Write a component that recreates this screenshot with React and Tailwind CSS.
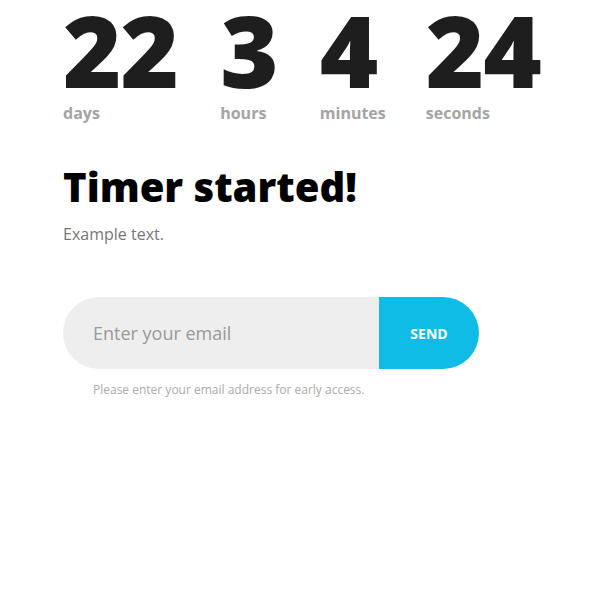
export default function App() {
  const items = [
    ["22", "days", "mr-[42px]"],
    ["3", "hours", "mr-[42px]"],
    ["4", "minutes", "mr-[40px]"],
    ["24", "seconds", ""],
  ];
  return (
    <div className="min-h-[600px] bg-white pl-[63px]">
      <div className="font-['Open_Sans',sans-serif]">
        <div className="flex">
          {items.map(([n, l, m]) => (
            <div key={l} className={`${m} flex flex-col`}>
              <div className="text-[100px] font-extrabold leading-[98px] tracking-[-1px] text-[#1e1e1e]">{n}</div>
              <div className="mt-[3px] text-[16px] font-bold leading-[24px] text-[#a4a4a4]">{l}</div>
            </div>
          ))}
        </div>
        <h1 className="mt-[37px] text-[40px] font-extrabold leading-[50px] text-black">Timer started!</h1>
        <p className="mt-[10px] text-[16px] leading-[24px] text-[#777777]">Example text.</p>
        <div className="mt-[51px] flex h-[72px] w-[416px]">
          <div className="flex flex-1 items-center rounded-l-full bg-[#eeeeee] pl-[30px] text-[18px] text-[#999999]">
            Enter your email
          </div>
          <button className="h-[72px] w-[100px] rounded-l-[2px] rounded-r-full bg-[#0ebce6] text-[14px] font-bold text-white">
            SEND
          </button>
        </div>
        <p className="mt-[12px] pl-[30px] text-[12px] leading-[18px] text-[#aaaaaa]">
          Please enter your email address for early access.
        </p>
      </div>
    </div>
  );
}
